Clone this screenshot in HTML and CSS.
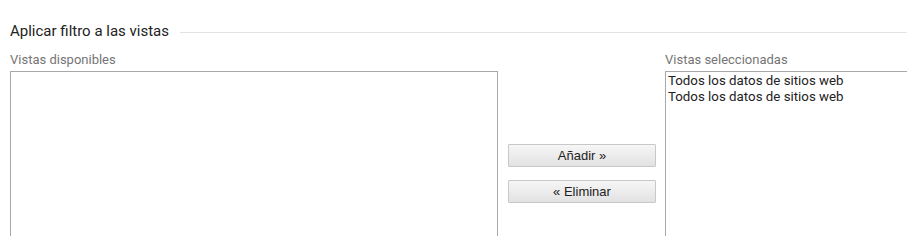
FILE: index.html
```html
<!DOCTYPE html>
<html lang="es">
<head>
<meta charset="utf-8">
<link rel="stylesheet" href="styles.css">
</head>
<body>
<div class="page">
  <div class="heading">
    <span class="heading-text">Aplicar filtro a las vistas</span>
    <span class="heading-rule"></span>
  </div>
  <div class="picker">
    <div class="col col-left">
      <div class="label">Vistas disponibles</div>
      <div class="listbox listbox-left"></div>
    </div>
    <div class="col col-mid">
      <button class="btn">Añadir »</button>
      <button class="btn">« Eliminar</button>
    </div>
    <div class="col col-right">
      <div class="label">Vistas seleccionadas</div>
      <div class="listbox listbox-right">
        <div class="option">Todos los datos de sitios web</div>
        <div class="option">Todos los datos de sitios web</div>
      </div>
    </div>
  </div>
</div>
</body>
</html>
```

FILE: styles.css
```css
html, body {
  margin: 0;
  padding: 0;
  background: #fff;
  overflow: hidden;
}
.page {
  width: 907px;
  height: 236px;
  overflow: hidden;
  padding: 20px 0 0 10px;
  box-sizing: border-box;
  font-family: Roboto, "Liberation Sans", sans-serif;
}
.heading {
  display: flex;
  align-items: center;
  height: 21px;
}
.heading-text {
  font-size: 15px;
  color: #222;
  white-space: nowrap;
}
.heading-rule {
  flex: 1;
  border-top: 1px solid #e2e2e2;
  margin-left: 11px;
  margin-top: 3px;
}
.picker {
  display: flex;
  margin-top: 11px;
}
.label {
  font-size: 13px;
  color: #757575;
  line-height: 16px;
  height: 16px;
  margin-bottom: 3px;
}
.col-left {
  width: 488px;
  flex: none;
}
.listbox {
  border: 1px solid #a9a9a9;
  height: 200px;
  box-sizing: border-box;
  background: #fff;
}
.col-mid {
  width: 167px;
  flex: none;
  display: flex;
  flex-direction: column;
  align-items: flex-start;
  padding-left: 10px;
  box-sizing: border-box;
  padding-top: 92px;
  gap: 13px;
}
.btn {
  width: 148px;
  height: 23px;
  border: 1px solid #c8c8c8;
  border-radius: 1px;
  background: linear-gradient(#f6f6f6, #e2e2e2);
  font-family: "Liberation Sans", Arial, sans-serif;
  font-size: 13px;
  color: #222;
  padding: 0;
  margin: 0;
}
.col-right {
  width: 260px;
  flex: none;
}
.listbox-right {
  padding: 1px 2px;
}
.option {
  font-size: 13.3px;
  color: #222;
  line-height: 15.5px;
  white-space: nowrap;
}
```
